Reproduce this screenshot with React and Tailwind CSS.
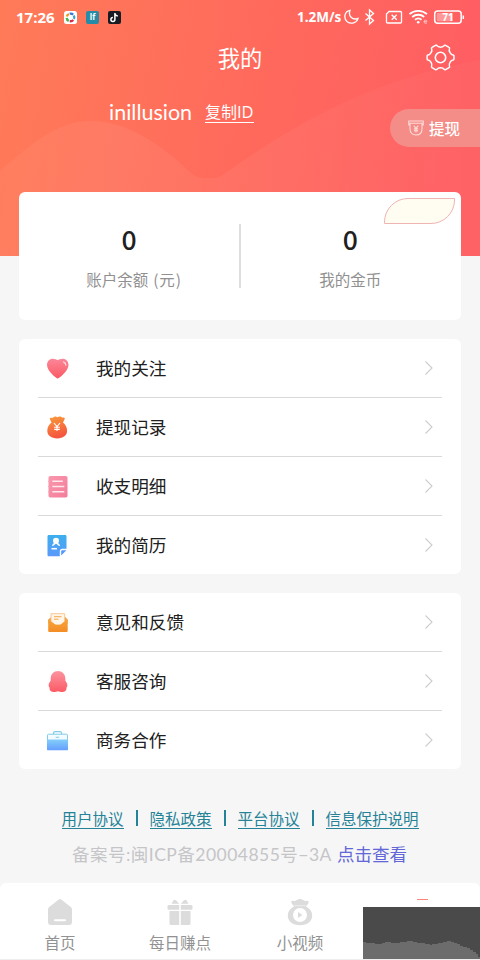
import React from "react";

const Chevron = () => (
  <svg className="-mt-0.5" width="10" height="16" viewBox="0 0 10 16" fill="none" stroke="#cdcdcd" strokeWidth="1.1">
    <path d="M1.500 1.500 8 8 1.500 14.500" />
  </svg>
);

const Heart = () => (
  <svg width="24" height="24" viewBox="0 0 24 24">
    <defs><linearGradient id="heart" x1="0" y1="0" x2="0" y2="1"><stop stopColor="#fb8799" /><stop offset="1" stopColor="#fb5963" /></linearGradient></defs>
    <path fill="url(#heart)" d="M11.7 21.6C10.700 21.600 1 14 1 8 1 4 3.700 1.700 6.600 1.700c2.400 0 4 .9 5.100 1.300 1.100-.4 2.700-1.300 5.100-1.300C19.800 1.700 22.500 4 22.500 8c0 6-9.800 13.600-10.800 13.600Z" />
    <path d="M17.500 5c1.500.5 2.200 1.500 2.300 3" fill="none" stroke="#ffe5e8" strokeWidth="1.200" strokeLinecap="round" />
  </svg>
);

const Purse = () => (
  <svg width="24" height="24" viewBox="0 0 24 24">
    <defs><linearGradient id="purse" x1="0" y1="0" x2=".3" y2="1"><stop stopColor="#fa9c3c" /><stop offset="1" stopColor="#f4563f" /></linearGradient></defs>
    <path fill="url(#purse)" d="M5.500 6.500 3.900 3.200c-.4-1 .5-1.700 1.500-1.500 1.500.3 2-.5 3.100-1 1.300-.5 1.900.5 3 .5s1.600-1 2.900-.6c1.200.4 1.600 1.200 3 1 1.200-.1 1.700.8 1.200 1.700L17 6.500c2.700 2 4.100 5 4.100 8.300 0 4.700-4 7.600-9.900 7.600s-9.900-2.900-9.900-7.600c0-3.300 1.400-6.300 4.200-8.300Z" />
    <path d="m8 7 3 3.700L14 7m-3 3.700V15m-2.900-3.700h5.800M8.200 13.400h5.600" fill="none" stroke="#fff" strokeWidth="1.100" />
    <path d="M6.500 5h9.300" stroke="#e9862f" strokeWidth=".8" />
  </svg>
);

const Ledger = () => (
  <svg width="24" height="24" viewBox="0 0 24 24">
    <defs><linearGradient id="ledger" x1="0" y1="0" x2="1" y2="1"><stop stopColor="#fa98ad" /><stop offset="1" stopColor="#f37c9a" /></linearGradient></defs>
    <rect x="2.500" y="1" width="19" height="21.500" rx="1.800" fill="url(#ledger)" />
    <path d="M6.300 6.300h10.500M6.300 11.500h12M6.300 16.700h12" stroke="#ffe8ed" strokeWidth="1.500" />
    <path d="M2 6.300h2M2 11.500h2M2 16.700h2" stroke="#f0a5b8" strokeWidth="1" />
  </svg>
);

const Resume = () => (
  <svg width="24" height="24" viewBox="0 0 24 24">
    <defs><linearGradient id="resume" x1="0" y1="0" x2="0" y2="1"><stop stopColor="#3cafed" /><stop offset="1" stopColor="#5b98fb" /></linearGradient></defs>
    <path fill="url(#resume)" d="M3 1h16c1 0 1.500.5 1.500 1.500V14.800h-4.200c-1.600 0-2.500.9-2.500 2.500v5H3c-1 0-1.500-.5-1.500-1.500V2.500C1.500 1.500 2 1 3 1Z" />
    <path fill="#5298ff" d="M15.200 17.500c0-.8.4-1.200 1.200-1.200h4L15.200 21.500Z" />
    <circle cx="10" cy="6.700" r="3" fill="#fff" />
    <path d="M6 12.200c.5-2.400 1.800-3.600 4-3.600s3.500 1.200 4.200 3.600l-2-.6-2.200-2-2.200 2Z" fill="#fff" />
    <path d="M5.500 14.700h5.500" stroke="#fff" strokeWidth="1.600" />
  </svg>
);

const Envelope = () => (
  <svg width="24" height="24" viewBox="0 0 24 24">
    <defs><linearGradient id="mail" x1="0" y1="0" x2="0" y2="1"><stop stopColor="#f6a43c" /><stop offset="1" stopColor="#f48d26" /></linearGradient></defs>
    <path fill="#f3a24b" d="m2.200 8.500 3-2.500h14l2.500 2.500v4H2.200Z" />
    <path d="M5 2.700h13.700v8l-4.200 3.500H9L5 11Z" fill="#fff5e9" stroke="#f9bd79" strokeWidth=".8" />
    <path d="M8 5.700h7.500M8 8.200h4.500" stroke="#f5a94e" strokeWidth="1" />
    <path fill="url(#mail)" d="m2.200 8.500 5.600 3.700c1 2.200 7.300 2.200 8.400 0l5.500-3.700v11c0 1-.6 1.500-1.500 1.500H3.500c-.8 0-1.300-.5-1.300-1.500Z" />
  </svg>
);

const Penguin = () => (
  <svg width="24" height="24" viewBox="0 0 24 24">
    <defs><linearGradient id="penguin" x1="0" y1="0" x2="0" y2="1"><stop stopColor="#fb94a0" /><stop offset="1" stopColor="#fb5b65" /></linearGradient></defs>
    <path fill="url(#penguin)" d="M12 1c4.400 0 7.300 3.300 7.300 7.600v2c1.700 2.100 2.500 4.700 1.900 6-.2.600-.5.800-.8.900.4 2.500-.6 4.200-3.700 4.400-2 .1-3.400-.3-4.700-.7-1.300.4-2.700.8-4.700.7-3.100-.2-4.100-1.900-3.700-4.400-.3-.1-.6-.3-.8-.9-.6-1.300.2-3.900 1.900-6v-2C4.700 4.300 7.600 1 12 1Z" />
  </svg>
);

const Briefcase = () => (
  <svg width="24" height="24" viewBox="0 0 24 24">
    <defs><linearGradient id="case" x1="0" y1="0" x2="0" y2="1"><stop stopColor="#83cef9" /><stop offset="1" stopColor="#659eff" /></linearGradient></defs>
    <path d="M7.500 5.500V4.200c0-1 .5-1.500 1.500-1.500h5c1 0 1.500.5 1.500 1.500v1.300" fill="none" stroke="#80cce8" strokeWidth="1.200" />
    <rect x="1.500" y="5.200" width="20" height="15" rx="1" fill="#f4fbff" stroke="#80cce8" />
    <path d="M1 10.500h21v9.800c0 .7-.4 1-1 1H2c-.6 0-1-.3-1-1Z" fill="url(#case)" />
    <path d="M9.700 8.300h3.500" stroke="#80cce8" />
  </svg>
);

function Menu({ items, className }) {
  return (
    <section className={"mx-[19px] rounded-md bg-white px-[19px] " + className}>
      {items.map(([label, Icon], i) => (
        <div key={label} className={"flex h-[59px] items-center pr-2 pl-2 " + (i < items.length - 1 ? "border-b border-[#d9d9d9] pt-[2px]" : "pt-[1px]")}>
          <Icon />
          <span className="ml-[26px] flex-1 whitespace-nowrap text-[17.6px] leading-6 text-[#202020]">{label}</span>
          <Chevron />
        </div>
      ))}
    </section>
  );
}

function StatusBar() {
  return (
    <div className="flex h-[34px] items-center pr-[15px] pl-4 font-['Open_Sans'] text-white">
      <span className="w-[48px] whitespace-nowrap text-[15px] font-bold leading-5">17:26</span>
      <svg className="shrink-0" width="13" height="13" viewBox="0 0 13 13">
        <rect width="13" height="13" rx="2.500" fill="#fff" />
        <g fill="none" strokeWidth="2.300">
          <path d="M2.700 5.500A4 4 0 0 1 5 3" stroke="#ef9a24" />
          <path d="M5.700 2.700a4 4 0 0 1 3.500 1" stroke="#3a76dc" />
          <path d="M9.800 4.500a4 4 0 0 1 .2 3.500" stroke="#35a8cf" />
          <path d="M9.300 9a4 4 0 0 1-3.500 1.200" stroke="#da284c" />
          <path d="M4.800 10A4 4 0 0 1 2.600 7" stroke="#48b34b" />
        </g>
      </svg>
      <div className="ml-[9px] flex size-[13px] items-center justify-center rounded-[2px] bg-[#258ba6] text-[8px] font-bold leading-none">lf</div>
      <svg className="ml-[9px] shrink-0" width="13" height="13" viewBox="0 0 13 13">
        <rect width="13" height="13" rx="2" fill="#191b22" />
        <path d="M6.900 2v6.500a2 2 0 1 1-2-2M6.900 2.300c.3 1.500 1.200 2.400 2.900 2.600" fill="none" stroke="#fff" strokeWidth="1.500" />
      </svg>
      <span className="ml-auto w-[47px] whitespace-nowrap text-[13.500px] font-bold leading-5">1.2M/s</span>
      <svg className="shrink-0" width="121" height="18" viewBox="0 0 121 18" fill="none" stroke="#fff" strokeWidth="1.300">
        <path d="M6 2.300C0 3.500-.5 10.500 3.200 13.700c4 3 9.800 1 10.800-3.300C8.500 12.500 3.800 8 6 2.300Z" />
        <path d="m21.500 5.500 8 7-4 3.500V2l4 3.500-8 7" />
        <path d="m45 3.500-2.500 2.500v8c0 .7.300 1 1 1h13c.7 0 1-.3 1-1V4.500c0-.7-.3-1-1-1Z" />
        <path d="m47.700 6.700 5 5m0-5-5 5" strokeWidth="1.400" />
        <g strokeWidth="1.800"><path d="M65.500 6.200c5-4.500 12.500-4.500 17.500 0M68.200 9c3.500-3 8.600-3 12 0M71 11.700c2-1.700 4.500-1.700 6.500 0" /></g>
        <circle cx="74.200" cy="14.200" r="1.300" fill="#fff" stroke="none" />
        <path d="M80 13.700h3c0-2-3-2-3 0 0 1.700 1.700 2 3 1.200" strokeWidth=".8" opacity=".7" />
        <rect x="90.700" y="3" width="26.500" height="12.200" rx="3" strokeWidth="1.500" />
        <rect x="92.700" y="5" width="16" height="8.200" rx="1" fill="#fff" opacity=".35" stroke="none" />
        <path d="M119.300 7.500v3.500" strokeWidth="1.500" />
        <text x="104" y="12.700" textAnchor="middle" fill="#fff" stroke="none" fontSize="10" fontWeight="700" fontFamily="Open Sans">71</text>
      </svg>
    </div>
  );
}

export default function App() {
  return (
    <main className="flex h-[960px] w-[480px] flex-col overflow-hidden bg-[#f6f6f6] font-[Lato,'Noto_Sans_CJK_SC',sans-serif]">
      <header className="relative h-[256px] shrink-0 bg-[linear-gradient(100deg,#ff7b58_0%,#ff6a5c_50%,#ff5f62_90%)] text-white">
        <svg className="absolute inset-0" width="480" height="256" viewBox="0 0 480 256">
          <defs><linearGradient id="wave" x1="0" y1="0" x2="1" y2="0"><stop stopColor="#fff" stopOpacity=".04" /><stop offset=".25" stopColor="#fff" stopOpacity=".06" /><stop offset="1" stopColor="#fff" stopOpacity=".02" /></linearGradient></defs>
          <path fill="url(#wave)" d="M0 171C25 150 55 120 91 121c39 0 75 28 101 53q5 4 12 4h8q7 0 15-6C284 132 365 80 480 60V256H0Z" />
        </svg>
        <div className="relative">
          <StatusBar />
          <div className="flex h-[48px] items-center">
            <span className="w-[54px]" />
            <h1 className="mt-0.5 flex-1 text-center text-[22.300px] font-normal leading-8">我的</h1>
            <svg className="-mt-0.5 mr-[25px]" width="29" height="29" viewBox="0 0 29 29" fill="none" stroke="#fff" strokeWidth="1.600" strokeLinejoin="round">
              <path d="M10.600 2.200c1.300 2.100 6.500 2.100 7.800 0 .4-.6 1-.8 1.600-.4l3.700 2.200c.6.300.8.900.5 1.500-1.100 2.200 1.400 6.500 3.900 6.800.6.100 1 .5 1 1.100v3.200c0 .6-.4 1-1 1.100-2.500.3-5 4.600-3.900 6.800.3.600.1 1.200-.5 1.500L20 28.200c-.6.300-1.200.1-1.600-.4-1.300-2.100-6.500-2.100-7.800 0-.4.500-1 .700-1.600.400L5.300 26c-.6-.3-.8-.9-.5-1.500 1.100-2.200-1.400-6.500-3.900-6.800-.6-.1-1-.5-1-1.100v-3.200c0-.6.400-1 1-1.100 2.500-.3 5-4.600 3.900-6.800-.3-.6-.1-1.200.5-1.500L9 1.800c.6-.4 1.200-.2 1.600.4Z" transform="translate(1.200 .7) scale(.92)" />
              <circle cx="14.500" cy="14.500" r="5.200" />
            </svg>
          </div>
          <div className="flex items-start pt-[17px] pl-[109px]">
            <span className="w-[96px] whitespace-nowrap text-[21.500px] leading-[27px] tracking-[0px]">inillusion</span>
            <span className="mt-[3px] flex h-[21px] items-start border-b-[1.500px] border-white text-[16px] leading-[20px]"><span className="-mb-px">复制</span><span className="font-['Open_Sans'] text-[16.500px]">ID</span></span>
            <div className="mt-[10px] ml-auto flex h-[38px] w-[90px] items-center rounded-l-full bg-[#f48c88] pl-[18px]">
              <svg width="16" height="16" viewBox="0 0 16 16" fill="none" stroke="#ffdad8" strokeWidth="1.100">
                <path d="M2.500 5H.8V1h14.400v4h-1.700M2 3.200h12V9c0 3.700-2.500 6-6 6s-6-2.300-6-6Z" />
                <path d="m5.800 5.700 2.200 2.700 2.200-2.700M8 8.400v4M5.900 8.900h4.200M5.900 10.600h4.200" />
              </svg>
              <span className="mt-0.5 ml-[5px] text-[15.500px] font-medium leading-5">提现</span>
            </div>
          </div>
        </div>
      </header>

      <section className="relative mx-[19px] -mt-16 flex h-[128px] shrink-0 rounded-md bg-white pt-8">
        <div className="flex w-[220px] flex-col items-center">
          <b className="-mt-px font-['Noto_Sans_CJK_SC'] text-[26.500px] font-medium leading-8 text-[#202020]">0</b>
          <span className="mt-[13px] flex whitespace-nowrap pl-[10px] text-[15.500px] leading-6 text-[#909090]">账户余额<span className="-mt-px ml-[5px] font-['Noto_Sans_CJK_SC'] tracking-[0.8px]">(元)</span></span>
        </div>
        <div className="h-[64px] w-[1.500px] shrink-0 bg-[#dfdfdf]" />
        <div className="flex flex-1 flex-col items-center pr-px">
          <b className="-mt-px font-['Noto_Sans_CJK_SC'] text-[26.500px] font-medium leading-8 text-[#202020]">0</b>
          <span className="mt-[13px] text-[15.500px] leading-6 text-[#909090]">我的金币</span>
        </div>
        <div className="absolute top-[6px] right-[6px] h-[26px] w-[71px] rounded-tl-[24px] rounded-br-[24px] border-[1.500px] border-[#efb5b3] bg-[#fffcf2]" />
      </section>

      <Menu className="mt-[19px] h-[235px] shrink-0" items={[["我的关注", Heart], ["提现记录", Purse], ["收支明细", Ledger], ["我的简历", Resume]]} />
      <Menu className="mt-[19px] h-[176px] shrink-0" items={[["意见和反馈", Envelope], ["客服咨询", Penguin], ["商务合作", Briefcase]]} />

      <footer className="mt-[40px] h-[74px] shrink-0">
        <div className="flex pl-[61.500px] text-[15.500px] leading-[20px] text-[#258297]">
          {["用户协议", "隐私政策", "平台协议", "信息保护说明"].map((t, i) => (
            <React.Fragment key={t}>
              {i > 0 && <span className="mx-[12px] mt-[1px] h-[16px] w-[2px] bg-[#258297]" />}
              <span className="h-[20px] whitespace-nowrap border-b-[1.500px] border-[#258297]">{t}</span>
            </React.Fragment>
          ))}
        </div>
        <p className="mt-[14px] flex whitespace-nowrap pl-[72px] text-[17.500px] leading-[24px] text-[#c5c5c8]">
          <span className="w-[265px] tracking-[0.480px]">备案号:闽ICP备20004855号−3A</span>
          <span className="text-[#6266d6]">点击查看</span>
        </p>
      </footer>

      <nav className="relative grid h-[77px] shrink-0 grid-cols-4 rounded-t-md border-b border-[#eeeeee] bg-white text-[15.500px] leading-5 text-[#929292]">
        <div className="flex flex-col items-center pt-[15px]">
          <svg width="28" height="28" viewBox="0 0 28 28"><path fill="#dcdcdc" d="M12.500 1.700c1-.8 2-.8 3 0l9 7c1 .8 1.500 1.600 1.500 2.800V24c0 2-1 3-3 3H5c-2 0-3-1-3-3V11.500c0-1.200.5-2 1.500-2.800Z" /><path d="M9 22.200h10" stroke="#fff" strokeWidth="2" strokeLinecap="round" /></svg>
          <span className="mt-[7px]">首页</span>
        </div>
        <div className="flex flex-col items-center pt-[15px]">
          <svg width="28" height="28" viewBox="0 0 28 28" fill="#dcdcdc"><path d="M3 7h10.200v4.700H3c-1 0-1.500-.5-1.500-1.500V8.500C1.500 7.500 2 7 3 7Zm11.800 0H25c1 0 1.500.5 1.500 1.500v1.700c0 1-.5 1.500-1.500 1.500H14.800ZM3.500 13h9.700v14H5c-1 0-1.500-.5-1.500-1.500Zm11.300 0h9.700v12.500c0 1-.5 1.500-1.500 1.500h-8.200ZM5.500 5.800 7.300 2.500q1-1.500 2.700-.2l3.200 3.500Zm9.300 0L18 2.300q1.700-1.300 2.700.2l1.800 3.300Z" /></svg>
          <span className="mt-[7px]">每日赚点</span>
        </div>
        <div className="flex flex-col items-center pt-[15px]">
          <svg width="28" height="28" viewBox="0 0 28 28"><path fill="#dcdcdc" d="M8 8.500 5.500 5C4.800 3.500 6 2.500 7.500 3c1.500.3 2-.5 3.500-1 1.500-.4 1.700-1.200 3-1.200s1.500.8 3 1.200c1.500.5 2 1.300 3.500 1C22 2.500 23.200 3.500 22.500 5L20 8.500c4 2 6.200 5 6.200 9 0 6-5 9.700-12.200 9.700S1.800 23.500 1.800 17.500c0-4 2.200-7 6.200-9Z" /><circle cx="14" cy="17" r="7" fill="#fff" /><path fill="#dcdcdc" d="M12 14v6l4.500-3Z" /><path d="M8 7.700h12" stroke="#f3f3f3" strokeWidth=".7" /></svg>
          <span className="mt-[7px]">小视频</span>
        </div>
        <div className="flex justify-center pl-[5px] pt-[16px]"><span className="h-px w-[11px] bg-[#ff8578]" /></div>
        <svg className="absolute right-0 bottom-0" width="117" height="52" viewBox="0 0 117 52">
          <path fill="#4a4a4a" d="M0 0h117v52H0Z" />
          <path fill="#6c6c6c" d="M0 35h3v1h9v1h7v-1h3v-1h6v1h9v-1h7v-1h6v1h4v1h8v1h5v1h2v-1h6v-1h5v-1h4v-1h4v1h3v1h3v1h3v2h3v1h4v1h3v2h3v2h3v2h2v3h2v3H0Z" />
        </svg>
      </nav>
    </main>
  );
}
